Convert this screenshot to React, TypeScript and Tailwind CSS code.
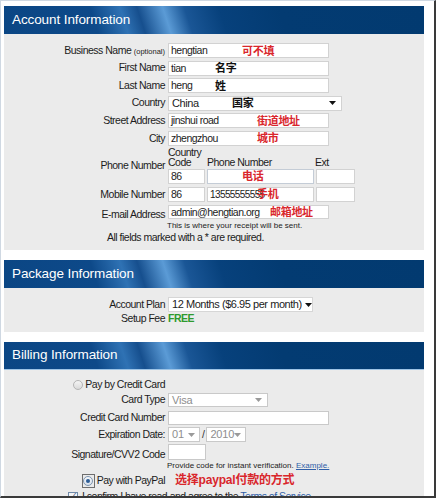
import type { ReactNode } from "react";

const HEAD =
  "h-[28px] flex items-center pl-[8px] text-white text-[13.5px] tracking-[-0.1px] bg-[linear-gradient(72deg,#0b4684_0%,#0d4989_22%,#2f72b4_29%,#164f8e_33%,#5b9bd6_39%,#1a5696_44%,#07417c_52%,#033b72_66%,#023a70_100%)]";

function Arrow({ gray }: { gray?: boolean }) {
  return (
    <svg width="7" height="4" viewBox="0 0 7 4" className="shrink-0">
      <polygon points="0,0 7,0 3.5,4" fill={gray ? "#9a9a9a" : "#111"} />
    </svg>
  );
}

function Note({ children, black, className }: { children: ReactNode; black?: boolean; className: string }) {
  return (
    <span
      className={`absolute top-1/2 -translate-y-1/2 whitespace-nowrap text-[11px] font-bold tracking-[-0.3px] ${
        black ? "text-[#111]" : "text-[#d9262c]"
      } ${className}`}
    >
      {children}
    </span>
  );
}

function Row({ label, children, className = "" }: { label: ReactNode; children: ReactNode; className?: string }) {
  return (
    <div className={`flex items-center ${className}`}>
      <div className="w-[161px] shrink-0 text-right whitespace-nowrap">{label}</div>
      <div className="ml-[3px] flex items-center">{children}</div>
    </div>
  );
}

export default function App() {
  return (
    <div className="w-[437px] h-[499px] bg-white font-['Liberation_Sans','Noto_Sans_CJK_SC',Arial,sans-serif] text-[10.5px] tracking-[-0.5px] text-[#1c1c1c]">
      <div className="w-[436px] h-[498px] overflow-hidden border-t border-l border-t-[#cfd8e2] border-l-[#cfd8e2] border-r-2 border-b-2 border-r-[#3a3a3a] border-b-[#3a3a3a] pl-[3px] pt-[5px]">
        <div className="w-[420px]">
          {/* Account */}
          <div className={HEAD}>Account Information</div>
          <div className="h-[216px] bg-[#ebebeb] pt-[9px] flex flex-col">
            <div className="flex flex-col gap-[2.6px]">
              <Row label={<>Business Name <span className="text-[7.5px] tracking-normal">(optional)</span></>} className="h-[15px]">
                <div className="relative w-[161px] h-[15px] bg-white border border-[#d2d2d2] pl-[2px] leading-[13px]">
                  hengtian
                  <Note className="left-[73px]">可不填</Note>
                </div>
              </Row>
              <Row label="First Name" className="h-[15px]">
                <div className="relative w-[161px] h-[15px] bg-white border border-[#d2d2d2] pl-[2px] leading-[13px]">
                  tian
                  <Note black className="left-[46px]">名字</Note>
                </div>
              </Row>
              <Row label="Last Name" className="h-[15px]">
                <div className="relative w-[161px] h-[15px] bg-white border border-[#d2d2d2] pl-[2px] leading-[13px]">
                  heng
                  <Note black className="left-[46px]">姓</Note>
                </div>
              </Row>
              <Row label="Country" className="h-[15px]">
                <div className="relative w-[174px] h-[15px] bg-white border border-[#d2d2d2] pl-[3px] pr-[5px] flex items-center justify-between text-[11px] tracking-[-0.4px]">
                  <span>China</span>
                  <Note black className="left-[63px]">国家</Note>
                  <Arrow />
                </div>
              </Row>
              <Row label="Street Address" className="h-[15px]">
                <div className="relative w-[161px] h-[15px] bg-white border border-[#d2d2d2] pl-[2px] leading-[13px]">
                  jinshui road
                  <Note className="left-[88px]">街道地址</Note>
                </div>
              </Row>
              <Row label="City" className="h-[15px]">
                <div className="relative w-[161px] h-[15px] bg-white border border-[#d2d2d2] pl-[2px] leading-[13px]">
                  zhengzhou
                  <Note className="left-[88px]">城市</Note>
                </div>
              </Row>
            </div>

            <Row label="Phone Number" className="mt-[1px]">
              <div className="flex flex-col">
                <div className="flex items-end h-[21px] leading-[10.5px]">
                  <div className="w-[39px] leading-[10.5px]">
                    <div>Country</div>
                    <div>Code</div>
                  </div>
                  <div className="w-[108px]">Phone Number</div>
                  <div>Ext</div>
                </div>
                <div className="mt-[1px] flex gap-[2px]">
                  <div className="w-[37px] h-[15px] bg-white border border-[#d2d2d2] pl-[2px] leading-[13px]">86</div>
                  <div className="relative w-[107px] h-[15px] bg-white border border-[#c4ccd6]">
                    <Note className="left-[34px]">电话</Note>
                  </div>
                  <div className="w-[39px] h-[15px] bg-white border border-[#d2d2d2]" />
                </div>
              </div>
            </Row>

            <Row label="Mobile Number" className="mt-[3px] h-[15px]">
              <div className="flex gap-[2px]">
                <div className="w-[37px] h-[15px] bg-white border border-[#d2d2d2] pl-[2px] leading-[13px]">86</div>
                <div className="relative w-[107px] h-[15px] bg-white border border-[#d2d2d2] pl-[2px] leading-[13px] text-[10px] tracking-[-0.6px]">
                  13555555555
                  <Note className="left-[49px]">手机</Note>
                </div>
                <div className="w-[39px] h-[15px] bg-white border border-[#d2d2d2]" />
              </div>
            </Row>

            <Row label={<span className="relative top-[3px]">E-mail Address</span>} className="mt-[3px] h-[14px]">
              <div className="relative w-[161px] h-[14px] bg-white border border-[#d2d2d2] pl-[2px] leading-[12px]">
                admin@hengtian.org
                <Note className="left-[101px]">邮箱地址</Note>
              </div>
            </Row>

            <div className="mt-[2px] pl-[163px] h-[9px] leading-[9px] text-[8px] tracking-normal">
              This is where your receipt will be sent.
            </div>
            <div className="mt-[2px] pl-[103px] leading-[11px]">All fields marked with a * are required.</div>
          </div>

          {/* Package */}
          <div className={`mt-[10px] ${HEAD}`}>Package Information</div>
          <div className="h-[44px] bg-[#ebebeb] pt-[9px]">
            <Row label="Account Plan" className="h-[15px]">
              <div className="w-[145px] h-[15px] bg-white border border-[#d6d6d6] pl-[3px] pr-[4px] flex items-center justify-between gap-[3px] text-[11px] tracking-[-0.45px] whitespace-nowrap overflow-hidden">
                <span>12 Months ($6.95 per month)</span>
                <Arrow />
              </div>
            </Row>
            <Row label="Setup Fee" className="mt-[1px] h-[11px]">
              <span className="font-bold text-[#2e9a2e]">FREE</span>
            </Row>
          </div>

          {/* Billing */}
          <div className={`mt-[10px] border-b border-b-[#9ec4e6] ${HEAD}`}>Billing Information</div>
          <div className="h-[200px] bg-[#ebebeb] pt-[10px] flex flex-col">
            <Row
              label={
                <span className="inline-flex items-center gap-[2px]">
                  <span className="inline-block w-[10px] h-[10px] rounded-full border border-[#b4b4b4] bg-[linear-gradient(180deg,#f4f4f4,#d9d9d9)]" />
                  Pay by Credit Card
                </span>
              }
              className="h-[12px]"
            >
              {null}
            </Row>
            <Row label="Card Type" className="mt-[1px] h-[14px]">
              <div className="w-[100px] h-[14px] bg-white border border-[#c9c9c9] pl-[3px] pr-[5px] flex items-center justify-between text-[11px] tracking-[-0.2px] text-[#8e8e8e]">
                <span>Visa</span>
                <Arrow gray />
              </div>
            </Row>
            <Row label="Credit Card Number" className="mt-[4px] h-[14px]">
              <div className="w-[161px] h-[14px] bg-white border border-[#c9c9c9]" />
            </Row>
            <Row label="Expiration Date:" className="mt-[2px] h-[15px]">
              <div className="w-[32px] h-[15px] bg-white border border-[#c9c9c9] pl-[3px] pr-[4px] flex items-center justify-between text-[11px] tracking-[-0.2px] text-[#8e8e8e]">
                <span>01</span>
                <Arrow gray />
              </div>
              <span className="mx-[2px] text-[#333]">/</span>
              <div className="w-[40px] h-[15px] bg-white border border-[#c9c9c9] pl-[3px] pr-[4px] flex items-center justify-between text-[11px] tracking-[-0.2px] text-[#8e8e8e]">
                <span>2010</span>
                <Arrow gray />
              </div>
            </Row>
            <div className="mt-[2px] flex items-end h-[16px]">
              <div className="w-[161px] text-right leading-[11px]">Signature/CVV2 Code</div>
              <div className="ml-[3px] w-[38px] h-[16px] bg-white border border-[#c9c9c9]" />
            </div>
            <div className="mt-[2px] pl-[163px] h-[8px] leading-[8px] text-[8px] tracking-normal whitespace-nowrap">
              Provide code for instant verification. <span className="text-[#2f5fa8] underline">Example.</span>
            </div>
            <Row
              label={
                <span className="inline-flex items-center gap-[2px]">
                  <span className="inline-flex items-center justify-center w-[13px] h-[14px] border border-[#6e6e6e]">
                    <span className="flex items-center justify-center w-[10px] h-[10px] rounded-full border border-[#7d95b0] bg-[linear-gradient(180deg,#f6f8fb,#d7dee8)]">
                      <span className="w-[4px] h-[4px] rounded-full bg-[#2c5d95]" />
                    </span>
                  </span>
                  Pay with PayPal
                </span>
              }
              className="mt-[3px] h-[14px]"
            >
              <span className="ml-[7px] text-[12px] font-bold tracking-[-0.2px] text-[#d9262c] whitespace-nowrap">
                选择paypal付款的方式
              </span>
            </Row>
            <div className="mt-[2px] pl-[64px] flex items-center gap-[4px] whitespace-nowrap">
              <span className="flex items-center justify-center w-[10px] h-[10px] border border-[#7089a8] bg-[#f2f4f7] text-[8px] leading-none text-[#2b4a6e]">
                ✓
              </span>
              <span>
                I confirm I have read and agree to the <span className="text-[#2f5fa8] underline">Terms of Service</span>
              </span>
            </div>
          </div>
        </div>
      </div>
    </div>
  );
}
